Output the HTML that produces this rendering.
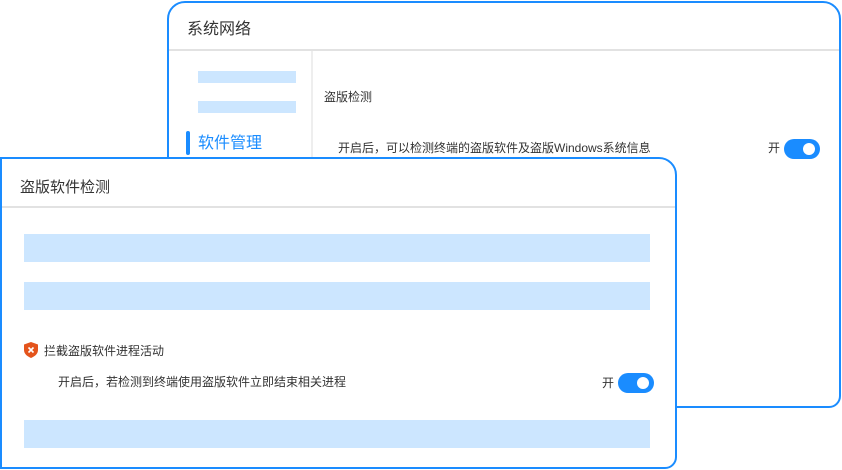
<!DOCTYPE html>
<html><head><meta charset="utf-8"><style>
body{margin:0;width:842px;height:470px;background:#fff;position:relative;overflow:hidden;font-family:"Liberation Sans","Noto Sans CJK SC",sans-serif;color:#333}
.p{position:absolute;box-sizing:border-box;border:2px solid #1a8cff;background:#fff}
.a{position:absolute;white-space:nowrap}
.bar{position:absolute;background:#cce6ff}
.tg{position:absolute;width:36px;height:20px;border-radius:10px;background:#1a8cff}
.tg:after{content:"";position:absolute;right:5px;top:4px;width:12px;height:12px;border-radius:50%;background:#fff}
</style></head><body>
<div class="p" style="left:167px;top:1px;width:674px;height:407px;border-radius:18px 18px 12px 0">
 <div class="a" style="left:18px;top:12px;font-size:16px">系统网络</div>
 <div style="position:absolute;left:0;right:0;top:46px;height:2px;background:#e2e2e2"></div>
 <div style="position:absolute;left:142px;top:48px;bottom:0;width:2px;background:#eee"></div>
 <div class="bar" style="left:29px;top:68px;width:98px;height:12px"></div>
 <div class="bar" style="left:29px;top:98px;width:98px;height:12px"></div>
 <div style="position:absolute;left:17px;top:128px;width:4px;height:24px;border-radius:2px;background:#1a8cff"></div>
 <div class="a" style="left:29px;top:126px;font-size:16px;color:#1a8cff">软件管理</div>
 <div class="a" style="left:155px;top:85px;font-size:12px">盗版检测</div>
 <div class="a" style="left:169px;top:136px;font-size:12px">开启后，可以检测终端的盗版软件及盗版Windows系统信息</div>
 <div class="a" style="left:599px;top:136px;font-size:12px">开</div>
 <div class="tg" style="left:615px;top:136px"></div>
</div>
<div class="p" style="left:0;top:157px;width:677px;height:312px;border-radius:0 18px 12px 0">
 <div class="a" style="left:18px;top:17px;font-size:15px">盗版软件检测</div>
 <div style="position:absolute;left:0;right:0;top:47px;height:2px;background:#e2e2e2"></div>
 <div class="bar" style="left:22px;top:75px;width:626px;height:28px"></div>
 <div class="bar" style="left:22px;top:123px;width:626px;height:28px"></div>
 <div class="bar" style="left:22px;top:261px;width:626px;height:28px"></div>
 <svg style="position:absolute;left:22px;top:183px" width="14" height="16" viewBox="0 0 14 16"><path d="M7 0L14 2.5V8C14 12 10.5 14.5 7 16C3.5 14.5 0 12 0 8V2.5Z" fill="#e4541c"/><path d="M4.5 5.5L9.5 10.5M9.5 5.5L4.5 10.5" stroke="#fff" stroke-width="1.6"/></svg>
 <div class="a" style="left:42px;top:183px;font-size:12px">拦截盗版软件进程活动</div>
 <div class="a" style="left:56px;top:214px;font-size:12px">开启后，若检测到终端使用盗版软件立即结束相关进程</div>
 <div class="a" style="left:600px;top:215px;font-size:12px">开</div>
 <div class="tg" style="left:616px;top:214px"></div>
</div>
</body></html>
